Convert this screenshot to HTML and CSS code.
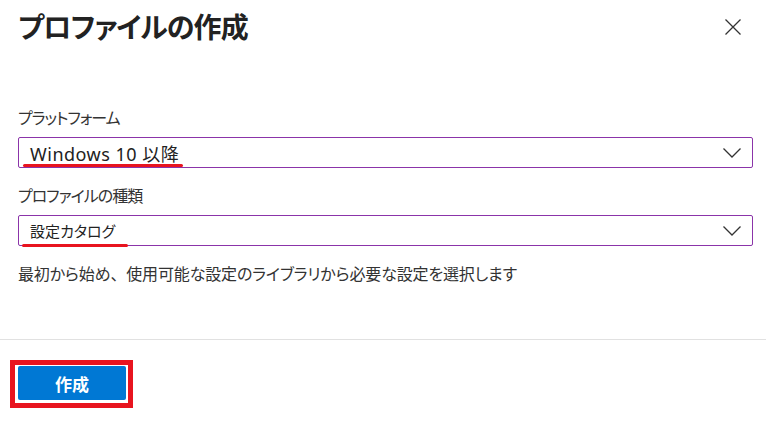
FILE: index.html
```html
<!DOCTYPE html>
<html lang="ja">
<head>
<meta charset="utf-8">
<link rel="stylesheet" href="styles.css">
</head>
<body>
<div class="panel">
  <header class="head">
    <h1 class="title">プロファイルの作成</h1>
    <button class="close" aria-label="閉じる">
      <svg width="16" height="16" viewBox="0 0 16 16"><path d="M0.5 0.5 L15.5 15.5 M15.5 0.5 L0.5 15.5" stroke="#333" stroke-width="1.3" fill="none"/></svg>
    </button>
  </header>
  <div class="form">
    <div class="field">
      <div class="label">プラットフォーム</div>
      <div class="select">
        <span class="value value-lg">Windows 10 以降</span>
        <svg class="chev" width="18" height="10" viewBox="0 0 18 10"><path d="M0.5 0.5 L9 9 L17.5 0.5" stroke="#333" stroke-width="1.3" fill="none"/></svg>
        <i class="mark mark-1"></i>
      </div>
    </div>
    <div class="field">
      <div class="label">プロファイルの種類</div>
      <div class="select">
        <span class="value">設定カタログ</span>
        <svg class="chev" width="18" height="10" viewBox="0 0 18 10"><path d="M0.5 0.5 L9 9 L17.5 0.5" stroke="#333" stroke-width="1.3" fill="none"/></svg>
        <i class="mark mark-2"></i>
      </div>
    </div>
    <p class="desc">最初から始め<span class="comma">、</span>使用可能な設定のライブラリから必要な設定を選択します</p>
  </div>
  <footer class="foot">
    <span class="highlight"><button class="primary">作成</button></span>
  </footer>
</div>
</body>
</html>
```
FILE: styles.css
```css
* { box-sizing: border-box; }
html, body { margin: 0; padding: 0; background: #fff; }
body {
  font-family: "Noto Sans", "Noto Sans CJK JP", sans-serif;
  color: #222;
  width: 766px;
  height: 421px;
  overflow: hidden;
}
.panel { display: flex; flex-direction: column; }
.head {
  display: flex;
  justify-content: space-between;
  align-items: flex-start;
  padding: 6px 25px 0 18px;
  height: 106px;
}
.title {
  margin: 0;
  font-family: "Noto Sans CJK JP", sans-serif;
  font-size: 28px;
  line-height: 40px;
  font-weight: 700;
  color: #222;
  font-feature-settings: "palt";
  letter-spacing: -0.9px;
}
.close {
  margin-top: 13px;
  padding: 0;
  border: 0;
  background: none;
  width: 16px;
  height: 16px;
  display: block;
}
.close svg { display: block; }
.form { padding: 0 13px 0 18px; }
.field { margin-bottom: 16px; }
.label {
  font-family: "Noto Sans CJK JP", sans-serif;
  font-size: 16px;
  line-height: 22px;
  color: #333;
  margin-bottom: 9px;
  font-feature-settings: "palt";
  letter-spacing: -1px;
}
.select {
  position: relative;
  height: 31px;
  border: 1px solid #8b34a9;
  border-radius: 2px;
  display: flex;
  align-items: center;
  padding: 0 11px 0 11px;
}
.value {
  flex: 1;
  font-family: "Noto Sans CJK JP", sans-serif;
  font-size: 15px;
  color: #222;
  font-feature-settings: "palt";
}
.value-lg { font-family: "Noto Sans", "Noto Sans CJK JP", sans-serif; font-size: 18px; letter-spacing: 0.5px; }
.chev { display: block; }
.mark {
  position: absolute;
  height: 3px;
  background: #e8141f;
  border-radius: 2px;
  bottom: 0;
}
.mark-1 { left: 4px; width: 160px; bottom: 0px; }
.mark-2 { left: 3px; width: 106px; bottom: -2px; }
.desc {
  margin: 11px 0 0;
  font-family: "Noto Sans CJK JP", sans-serif;
  font-size: 16px;
  line-height: 22px;
  color: #333;
  font-feature-settings: "palt";
  letter-spacing: -0.15px;
}
.comma { font-feature-settings: normal; }
.foot {
  margin-top: 55px;
  border-top: 1px solid #e1e1e1;
  padding: 20px 0 0 10px;
}
.highlight {
  display: inline-block;
  border: 5px solid #e8141f;
  padding: 1px 2px 3px 3px;
}
.primary {
  display: block;
  width: 108px;
  height: 34px;
  border: 0;
  border-radius: 2px;
  background: #0078d4;
  color: #fff;
  font-family: "Noto Sans CJK JP", sans-serif;
  font-size: 17px;
  font-weight: 700;
  padding: 0;
}
```
